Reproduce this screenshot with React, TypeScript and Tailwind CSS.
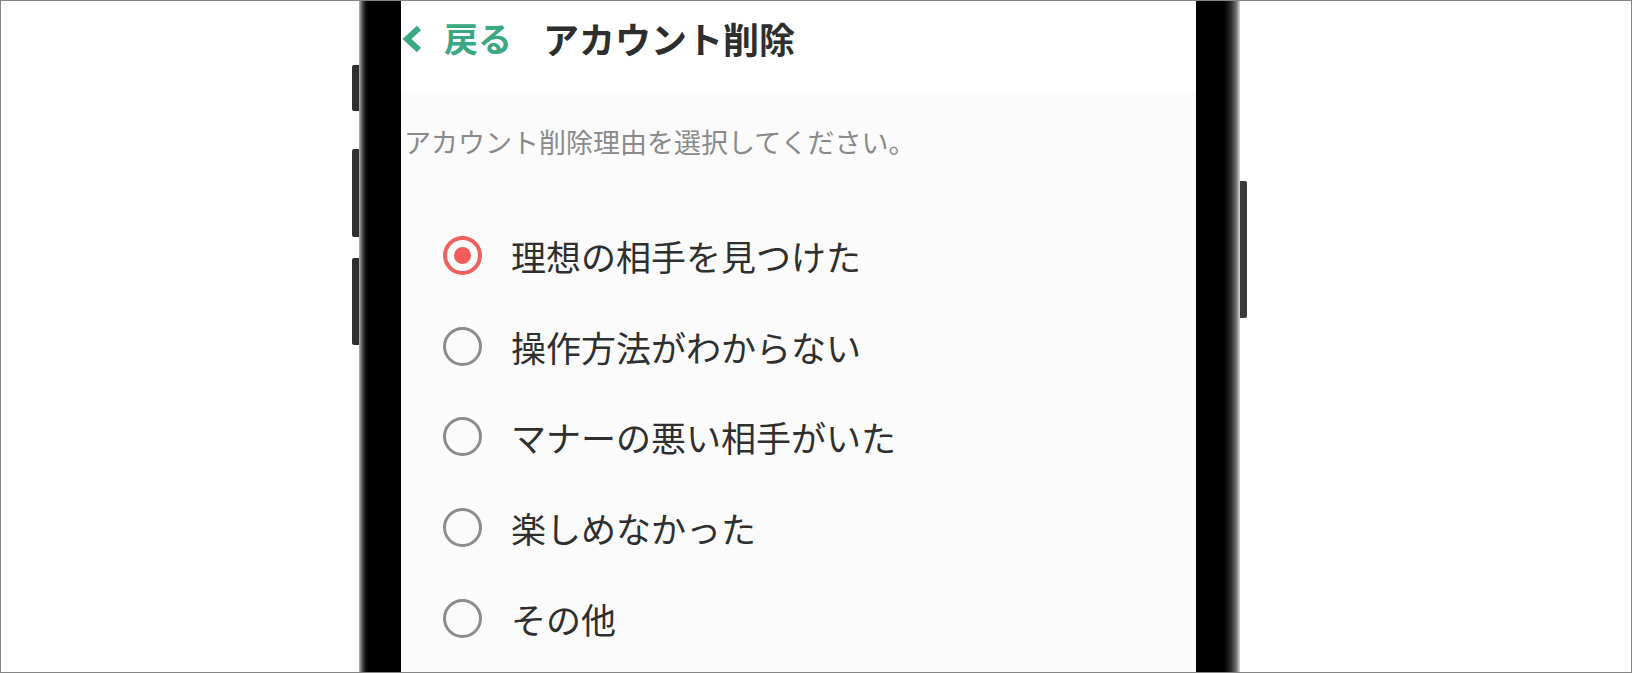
import { useState } from 'react';

const riyuu = [
  '理想の相手を見つけた',
  '操作方法がわからない',
  'マナーの悪い相手がいた',
  '楽しめなかった',
  'その他',
];

const fonte = { fontFamily: '"Noto Sans CJK JP", "Noto Sans", sans-serif' };

function Radio({ ativo }: { ativo: boolean }) {
  return ativo ? (
    <span className="flex h-[39px] w-[39px] shrink-0 items-center justify-center rounded-full border-[4px] border-[#ee5f5f]">
      <span className="h-[17px] w-[17px] rounded-full bg-[#f25c5c]" />
    </span>
  ) : (
    <span className="h-[39px] w-[39px] shrink-0 rounded-full border-[3px] border-[#8c8c8c]" />
  );
}

export default function App() {
  const [escolha, setEscolha] = useState(0);

  return (
    <div className="box-border flex h-[673px] w-[1632px] overflow-hidden border border-[#858585] bg-white" style={fonte}>
      <div className="w-[351px] shrink-0" />

      {/* botões laterais esquerdos */}
      <div className="flex w-[7px] shrink-0 flex-col pt-[64px]">
        <div className="h-[46px] rounded-l-[2px] bg-[#303030]" />
        <div className="mt-[38px] h-[88px] rounded-l-[2px] bg-[#303030]" />
        <div className="mt-[21px] h-[87px] rounded-l-[2px] bg-[#303030]" />
      </div>

      {/* moldura esquerda */}
      <div className="w-[42px] shrink-0 bg-[linear-gradient(to_right,#b5b5b5_0px,#5a5a5a_3px,#1a1a1a_6px,#000_9px,#000_100%)]" />

      {/* tela */}
      <div className="flex w-[795px] shrink-0 flex-col bg-[#fbfbfb]">
        <header className="flex h-[91px] shrink-0 items-center bg-white pb-[18px]">
          <svg viewBox="0 0 22 30" className="mt-[2px] h-[30px] w-[22px] text-[#3aa883]" fill="none" stroke="currentColor" strokeWidth={6} strokeLinejoin="miter" strokeLinecap="butt">
            <path d="M18 4 L6 15 L18 26" />
          </svg>
          <span className="ml-[21px] text-[34px] font-bold leading-none text-[#3aa883]">戻る</span>
          <span className="ml-[31px] text-[36px] font-bold leading-none text-[#2e2e2e]">アカウント削除</span>
        </header>

        <main className="flex flex-col pt-[30px]">
          <p className="pl-[3px] text-[27px] leading-[40px] text-[#8a8a8a]">アカウント削除理由を選択してください。</p>

          <div className="mt-[48px] flex flex-col">
            {riyuu.map((r, i) => (
              <button
                key={r}
                onClick={() => setEscolha(i)}
                className="flex h-[90.8px] items-center gap-[29px] pl-[42px] text-left"
              >
                <Radio ativo={escolha === i} />
                <span className="text-[35px] leading-none text-[#2f2f2f]">{r}</span>
              </button>
            ))}
          </div>
        </main>
      </div>

      {/* moldura direita */}
      <div className="w-[44px] shrink-0 bg-[linear-gradient(to_right,#000_0px,#000_28px,#2a2a2a_35px,#6e6e6e_40px,#b8b8b8_43px,#e0e0e0_44px)]" />

      {/* botão lateral direito */}
      <div className="flex w-[7px] shrink-0 flex-col pt-[180px]">
        <div className="h-[137px] rounded-r-[2px] bg-[#3a3a3a]" />
      </div>
    </div>
  );
}
